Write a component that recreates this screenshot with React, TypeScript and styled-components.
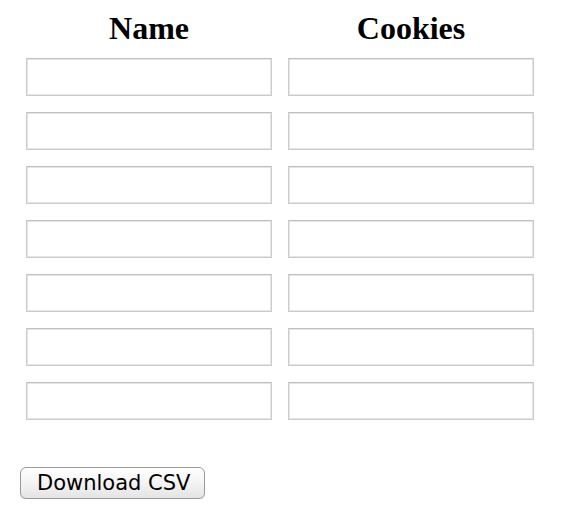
import React, { useState } from 'react'
import styled, { createGlobalStyle } from 'styled-components'

const GlobalStyle = createGlobalStyle`
  html, body {
    margin: 0;
    padding: 0;
    background: #ffffff;
  }
`

const Page = styled.div`
  padding: 10px 0 0 26px;
  font-family: "Liberation Serif", "Times New Roman", serif;
`

const Grid = styled.div`
  display: grid;
  grid-template-columns: 246px 246px;
  column-gap: 16px;
  row-gap: 16px;
`

const HeaderRow = styled(Grid)`
  margin-bottom: 11px;
`

const ColumnTitle = styled.div`
  font-size: 32px;
  font-weight: 700;
  line-height: 37px;
  text-align: center;
  color: #000;
`

const Cell = styled.input`
  box-sizing: border-box;
  width: 246px;
  height: 38px;
  margin: 0;
  padding: 4px 6px;
  border: 1px solid #cbcbcb;
  border-top-color: #bfbfbf;
  box-shadow: inset 0 0 0 1px #e6e6e6;
  background: #fff;
  font-family: "DejaVu Sans", sans-serif;
  font-size: 16px;
  outline: none;
`

const DownloadButton = styled.button`
  margin: 47px 0 0 -6px;
  box-sizing: border-box;
  height: 32px;
  padding: 0 14px 0 16px;
  border: 1px solid #9a9a9a;
  border-radius: 6px;
  background: linear-gradient(#ffffff, #f3f3f3 50%, #e4e4e4);
  box-shadow: 0 1px 1px rgba(0, 0, 0, 0.15);
  font-family: "DejaVu Sans", sans-serif;
  font-size: 21px;
  line-height: 30px;
  color: #000;
  cursor: pointer;
`

const ROWS = 7

export default function App() {
  const [rows, setRows] = useState(() =>
    Array.from({ length: ROWS }, () => ({ name: '', cookies: '' }))
  )

  const update = (i: number, key: 'name' | 'cookies', value: string) => {
    setRows(prev => prev.map((r, idx) => (idx === i ? { ...r, [key]: value } : r)))
  }

  const download = () => {
    const csv = ['Name,Cookies', ...rows.map(r => `${r.name},${r.cookies}`)].join('\n')
    console.log(csv)
  }

  return (
    <Page>
      <GlobalStyle />
      <HeaderRow>
        <ColumnTitle>Name</ColumnTitle>
        <ColumnTitle>Cookies</ColumnTitle>
      </HeaderRow>
      <Grid>
        {rows.map((r, i) => (
          <React.Fragment key={i}>
            <Cell value={r.name} onChange={e => update(i, 'name', e.target.value)} />
            <Cell value={r.cookies} onChange={e => update(i, 'cookies', e.target.value)} />
          </React.Fragment>
        ))}
      </Grid>
      <DownloadButton onClick={download}>Download CSV</DownloadButton>
    </Page>
  )
}
